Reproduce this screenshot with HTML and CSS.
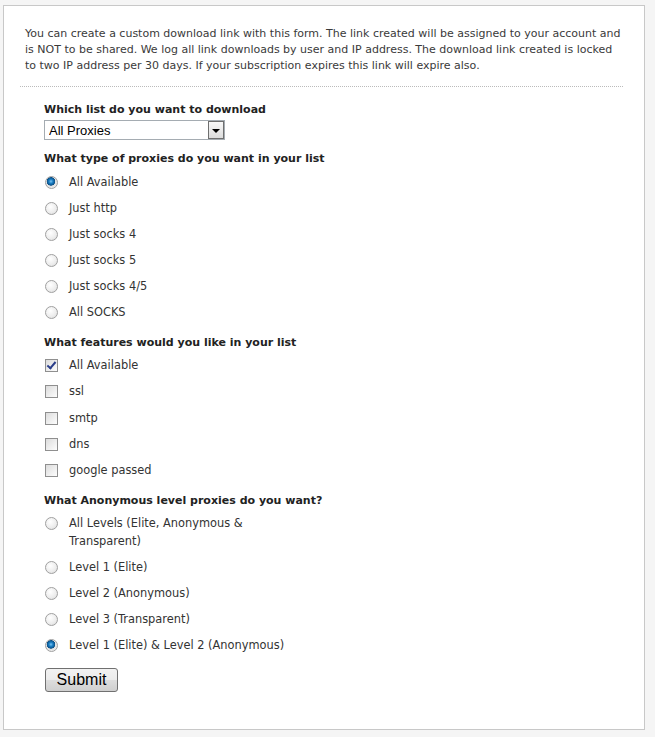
FILE: index.html
```html
<!DOCTYPE html>
<html lang="en">
<head>
    <meta charset="UTF-8">
    <title>Custom download link</title>
    <link rel="stylesheet" href="styles.css">
</head>
<body>
    <div class="panel">
        <p class="intro">You can create a custom download link with this form. The link created will be assigned to your account and is NOT to be shared. We log all link downloads by user and IP address. The download link created is locked to two IP address per 30 days. If your subscription expires this link will expire also.</p>
        <hr class="dots">

        <form class="dl-form">
            <h4>Which list do you want to download</h4>
            <div class="select-wrap">
                <select name="list">
                    <option>All Proxies</option>
                    <option>Elite Proxies</option>
                </select>
                <span class="select-arrow"></span>
            </div>

            <h4>What type of proxies do you want in your list</h4>
            <label class="opt"><input type="radio" name="type" checked><span>All Available</span></label>
            <label class="opt"><input type="radio" name="type"><span>Just http</span></label>
            <label class="opt"><input type="radio" name="type"><span>Just socks 4</span></label>
            <label class="opt"><input type="radio" name="type"><span>Just socks 5</span></label>
            <label class="opt"><input type="radio" name="type"><span>Just socks 4/5</span></label>
            <label class="opt"><input type="radio" name="type"><span>All SOCKS</span></label>

            <h4 class="h-check">What features would you like in your list</h4>
            <label class="opt chk"><input type="checkbox" checked><span>All Available</span></label>
            <label class="opt chk"><input type="checkbox"><span>ssl</span></label>
            <label class="opt chk"><input type="checkbox"><span>smtp</span></label>
            <label class="opt chk"><input type="checkbox"><span>dns</span></label>
            <label class="opt chk"><input type="checkbox"><span>google passed</span></label>

            <h4>What Anonymous level proxies do you want?</h4>
            <label class="opt"><input type="radio" name="level"><span>All Levels (Elite, Anonymous &amp;<br>Transparent)</span></label>
            <label class="opt"><input type="radio" name="level"><span>Level 1 (Elite)</span></label>
            <label class="opt"><input type="radio" name="level"><span>Level 2 (Anonymous)</span></label>
            <label class="opt"><input type="radio" name="level"><span>Level 3 (Transparent)</span></label>
            <label class="opt"><input type="radio" name="level" checked><span>Level 1 (Elite) &amp; Level 2 (Anonymous)</span></label>

            <button type="submit" class="submit">Submit</button>
        </form>
    </div>
</body>
</html>
```

FILE: styles.css
```css
body {
    margin: 0;
    background: #f5f5f5;
    font-family: "DejaVu Sans", Verdana, sans-serif;
    font-size: 11px;
    color: #333;
}
.panel {
    margin: 5px 0 0 3px;
    width: 603px;
    height: 687px;
    padding: 20px 21px 16px 16px;
    background: #fff;
    border: 1px solid #c8c8c8;
}
.intro {
    margin: 0;
    padding: 0 0 0 5px;
    line-height: 16px;
    color: #3a3a3a;
}
.dots {
    margin: 12px 0 0;
    border: 0;
    border-top: 1px dotted #bbb;
    height: 0;
}
.dl-form {
    padding: 0 0 0 24px;
}
.dl-form h4 {
    margin: 13px 0 4px;
    font-size: 11px;
    line-height: 18px;
    color: #222;
}
.dl-form h4:first-child {
    margin-top: 14px;
    margin-bottom: 1px;
}
.select-wrap + h4 {
    margin-top: 10px;
}
.dl-form .select-wrap + h4 {
    margin-bottom: 5px;
}
.dl-form h4.h-check {
    margin-bottom: 4px;
}
.select-wrap {
    position: relative;
    width: 181px;
    height: 20px;
}
.select-wrap select {
    appearance: none;
    width: 181px;
    height: 20px;
    margin: 0;
    padding: 0 0 0 4px;
    border: 1px solid #a5acb2;
    background: #fff;
    font-family: "Liberation Sans", Arial, sans-serif;
    font-size: 13px;
    color: #000;
}
.select-arrow {
    position: absolute;
    right: 1px;
    top: 1px;
    width: 14px;
    height: 16px;
    border: 1px solid #6f6f6f;
    background: linear-gradient(#f8f8f8, #dcdcdc);
    pointer-events: none;
}
.select-arrow::after {
    content: "";
    position: absolute;
    left: 3px;
    top: 7px;
    border-left: 4px solid transparent;
    border-right: 4px solid transparent;
    border-top: 4px solid #000;
}
.opt {
    display: flex;
    align-items: flex-start;
    margin-bottom: 8px;
    line-height: 18px;
    font-size: 11.4px;
}
.opt.chk {
    margin-bottom: 8.3px;
}
.opt input {
    appearance: none;
    flex: none;
    width: 13px;
    height: 13px;
    margin: 3px 11px 0 1px;
    position: relative;
}
.opt input[type="radio"] {
    border-radius: 50%;
    border: 1px solid #a0a0a0;
    background: radial-gradient(circle at 40% 35%, #fff 0, #ececec 60%, #d4d4d4 100%);
}
.opt input[type="radio"]:checked {
    background: radial-gradient(circle at 45% 40%, #7cc4f2 0, #1b7fc4 2px, #0b4f86 4px, #e2e2e2 4.5px, #f4f4f4 100%);
}
.opt input[type="checkbox"] {
    border: 1px solid #8f8f8f;
    background: linear-gradient(135deg, #dcdcdc, #fdfdfd);
}
.opt input[type="checkbox"]:checked::after {
    content: "";
    position: absolute;
    left: 3px;
    top: 0px;
    width: 3px;
    height: 7px;
    border-right: 2px solid #2b3e8a;
    border-bottom: 2px solid #2b3e8a;
    transform: rotate(40deg);
}
.submit {
    margin: 6px 0 0 1px;
    width: 73px;
    height: 24px;
    padding: 0;
    border: 1px solid #707070;
    border-radius: 3px;
    background: linear-gradient(#f2f2f2 0, #ebebeb 50%, #dddddd 51%, #cfcfcf 100%);
    font-family: "Liberation Sans", Arial, sans-serif;
    font-size: 16px;
    color: #000;
}
```
